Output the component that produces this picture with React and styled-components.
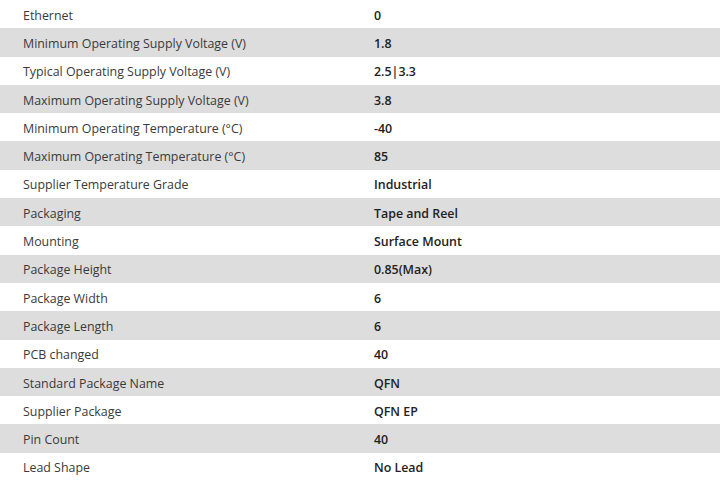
import React from 'react';
import styled, { createGlobalStyle } from 'styled-components';

const Global = createGlobalStyle`
body {
	margin: 0;
	background: #fff;
}
`;

const Table = styled.div`
display: flex;
flex-direction: column;
width: 720px;
font-family: "Open Sans", "Noto Sans", sans-serif;
font-size: 12.4px;
`;

const Row = styled.div`
display: grid;
grid-template-columns: 374px 1fr;
align-items: center;
height: 28.3px;
padding-top: 2px;
box-sizing: border-box;
background: ${({shaded}) => shaded ? '#dddddd' : '#fff'};
`;

const Label = styled.div`
padding-left: 23px;
color: #3a3a3a;
`;

const Value = styled.div`
color: #222;
font-weight: 600;
`;

const specs = [
	['Ethernet', '0'],
	['Minimum Operating Supply Voltage (V)', '1.8'],
	['Typical Operating Supply Voltage (V)', '2.5|3.3'],
	['Maximum Operating Supply Voltage (V)', '3.8'],
	['Minimum Operating Temperature (°C)', '-40'],
	['Maximum Operating Temperature (°C)', '85'],
	['Supplier Temperature Grade', 'Industrial'],
	['Packaging', 'Tape and Reel'],
	['Mounting', 'Surface Mount'],
	['Package Height', '0.85(Max)'],
	['Package Width', '6'],
	['Package Length', '6'],
	['PCB changed', '40'],
	['Standard Package Name', 'QFN'],
	['Supplier Package', 'QFN EP'],
	['Pin Count', '40'],
	['Lead Shape', 'No Lead'],
];

export default function App() {
	return <>
		<Global />
		<Table>
			{specs.map(([label, value], i) => <Row key={label} shaded={i % 2 === 1}>
				<Label>{label}</Label>
				<Value>{value}</Value>
			</Row>)}
		</Table>
	</>;
}
